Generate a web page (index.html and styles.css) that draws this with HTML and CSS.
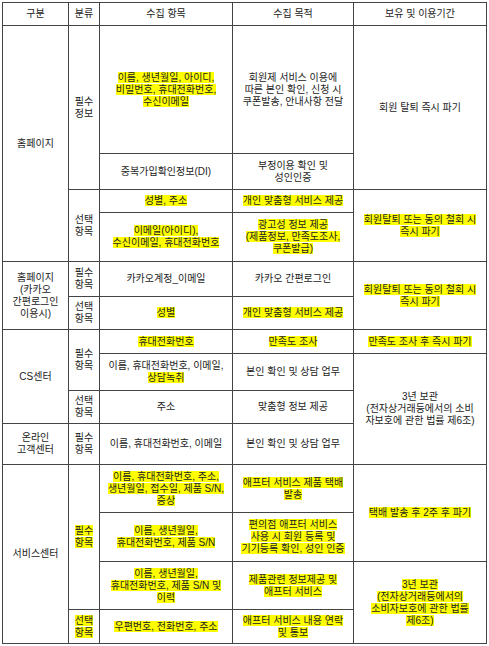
FILE: index.html
```html
<!DOCTYPE html>
<html lang="ko">
<head>
<meta charset="utf-8">
<link rel="stylesheet" href="styles.css">
</head>
<body>
<table class="privacy">
  <colgroup>
    <col class="c1"><col class="c2"><col class="c3"><col class="c4"><col class="c5">
  </colgroup>
  <thead>
    <tr class="h-head"><th>구분</th><th>분류</th><th>수집 항목</th><th>수집 목적</th><th>보유 및 이용기간</th></tr>
  </thead>
  <tbody>
    <tr class="h1">
      <td rowspan="4">홈페이지</td>
      <td rowspan="2">필수<br>정보</td>
      <td><span class="hl">이름, 생년월일, 아이디,<br>비밀번호, 휴대전화번호,<br>수신이메일</span></td>
      <td>회원제 서비스 이용에<br>따른 본인 확인, 신청 시<br>쿠폰발송, 안내사항 전달</td>
      <td rowspan="2">회원 탈퇴 즉시 파기</td>
    </tr>
    <tr class="h2">
      <td>중복가입확인정보(DI)</td>
      <td>부정이용 확인 및<br>성인인증</td>
    </tr>
    <tr class="h3">
      <td rowspan="2">선택<br>항목</td>
      <td><span class="hl">성별, 주소</span></td>
      <td><span class="hl">개인 맞춤형 서비스 제공</span></td>
      <td rowspan="2"><span class="hl">회원탈퇴 또는 동의 철회 시<br>즉시 파기</span></td>
    </tr>
    <tr class="h4">
      <td><span class="hl">이메일(아이디),<br>수신이메일, 휴대전화번호</span></td>
      <td><span class="hl">광고성 정보 제공<br>(제품정보, 만족도조사,<br>쿠폰발급)</span></td>
    </tr>
    <tr class="h5">
      <td rowspan="2">홈페이지<br>(카카오<br>간편로그인<br>이용시)</td>
      <td>필수<br>항목</td>
      <td>카카오계정_이메일</td>
      <td>카카오 간편로그인</td>
      <td rowspan="2"><span class="hl">회원탈퇴 또는 동의 철회 시<br>즉시 파기</span></td>
    </tr>
    <tr class="h6">
      <td>선택<br>항목</td>
      <td><span class="hl">성별</span></td>
      <td><span class="hl">개인 맞춤형 서비스 제공</span></td>
    </tr>
    <tr class="h7">
      <td rowspan="3">CS센터</td>
      <td rowspan="2">필수<br>항목</td>
      <td><span class="hl">휴대전화번호</span></td>
      <td><span class="hl">만족도 조사</span></td>
      <td><span class="hl">만족도 조사 후 즉시 파기</span></td>
    </tr>
    <tr class="h8">
      <td>이름, 휴대전화번호, 이메일,<br><span class="hl">상담녹취</span></td>
      <td>본인 확인 및 상담 업무</td>
      <td rowspan="3">3년 보관<br>(전자상거래등에서의 소비<br>자보호에 관한 법률 제6조)</td>
    </tr>
    <tr class="h9">
      <td>선택<br>항목</td>
      <td>주소</td>
      <td>맞춤형 정보 제공</td>
    </tr>
    <tr class="h10">
      <td>온라인<br>고객센터</td>
      <td>필수<br>항목</td>
      <td>이름, 휴대전화번호, 이메일</td>
      <td>본인 확인 및 상담 업무</td>
    </tr>
    <tr class="h11">
      <td rowspan="4">서비스센터</td>
      <td rowspan="3"><span class="hl">필수<br>항목</span></td>
      <td><span class="hl">이름, 휴대전화번호, 주소,<br>생년월일, 접수일, 제품 S/N,<br>증상</span></td>
      <td><span class="hl">애프터 서비스 제품 택배<br>발송</span></td>
      <td rowspan="2"><span class="hl">택배 발송 후 2주 후 파기</span></td>
    </tr>
    <tr class="h12">
      <td><span class="hl">이름, 생년월일,<br>휴대전화번호, 제품 S/N</span></td>
      <td><span class="hl">편의점 애프터 서비스<br>사용 시 회원 등록 및<br>기기등록 확인, 성인 인증</span></td>
    </tr>
    <tr class="h13">
      <td><span class="hl">이름, 생년월일,<br>휴대전화번호, 제품 S/N 및<br>이력</span></td>
      <td><span class="hl">제품관련 정보제공 및<br>애프터 서비스</span></td>
      <td rowspan="2"><span class="hl">3년 보관<br>(전자상거래등에서의<br>소비자보호에 관한 법률<br>제6조)</span></td>
    </tr>
    <tr class="h14">
      <td><span class="hl">선택<br>항목</span></td>
      <td><span class="hl">우편번호, 전화번호, 주소</span></td>
      <td><span class="hl">애프터 서비스 내용 연락<br>및 통보</span></td>
    </tr>
  </tbody>
</table>
</body>
</html>
```

FILE: styles.css
```css
html, body {
  margin: 0;
  padding: 0;
  background: #ffffff;
}
body {
  padding: 2px 0 0 2px;
  font-family: "Liberation Sans", "Noto Sans CJK KR", sans-serif;
  font-size: 10px;
  line-height: 12px;
  color: #222222;
}
.privacy {
  border-collapse: collapse;
  table-layout: fixed;
  width: 484px;
  border: 1px solid #444444;
}
.c1 { width: 66px; }
.c2 { width: 31px; }
.c3 { width: 133px; }
.c4 { width: 121px; }
.c5 { width: 133px; }
.privacy th,
.privacy td {
  border: 1px solid #444444;
  padding: 0 1px;
  text-align: center;
  vertical-align: middle;
  font-weight: normal;
  white-space: nowrap;
  overflow: hidden;
}
.hl {
  background: #ffff00;
}
.h-head { height: 23px; }
.h1 { height: 128px; }
.h2 { height: 36px; }
.h3 { height: 23px; }
.h4 { height: 49px; }
.h5 { height: 35px; }
.h6 { height: 33px; }
.h7 { height: 24px; }
.h8 { height: 37px; }
.h9 { height: 33px; }
.h10 { height: 41px; }
.h11 { height: 48px; }
.h12 { height: 49px; }
.h13 { height: 48px; }
.h14 { height: 34px; }
```
